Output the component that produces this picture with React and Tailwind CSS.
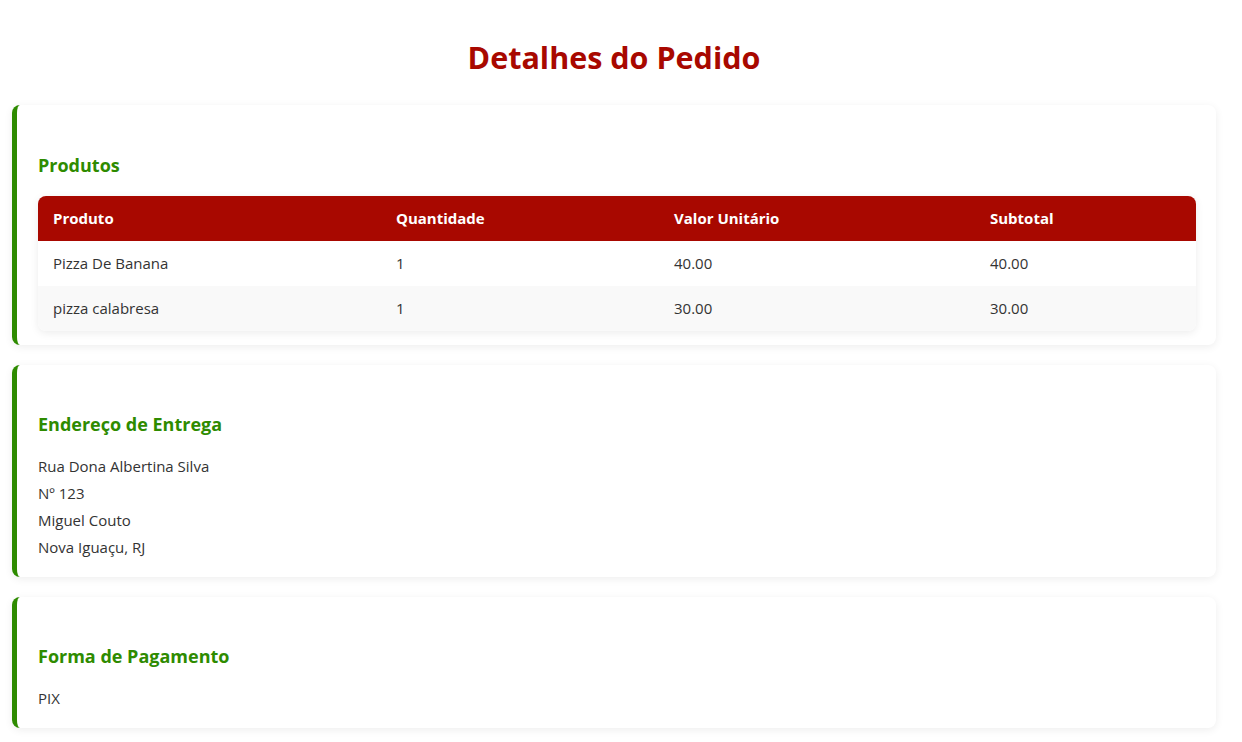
const produtos = [
  { nome: "Pizza De Banana", qtd: 1, valor: "40.00", subtotal: "40.00" },
  { nome: "pizza calabresa", qtd: 1, valor: "30.00", subtotal: "30.00" },
];

const Card = ({ title, children }) => (
  <div className="bg-white rounded-lg border-l-[5px] border-[#2e8b00] shadow-[0_2px_8px_rgba(0,0,0,0.07)] pl-[21px] pr-5 pt-[46px] pb-[16px]">
    <h2 className="text-[18px] leading-[27px] font-bold text-[#2e8b00] mb-[15px]">{title}</h2>
    {children}
  </div>
);

export default function App() {
  return (
    <div className="min-h-screen bg-white text-[#333] font-['Segoe_UI','Open_Sans',sans-serif] px-3 pb-3" style={{ width: 1228 }}>
      <h1 className="text-[30.5px] leading-[40px] font-bold text-[#a80800] text-center pt-[37px] pb-[28px]">
        Detalhes do Pedido
      </h1>

      <div className="flex flex-col gap-5">
        <div className="bg-white rounded-lg border-l-[5px] border-[#2e8b00] shadow-[0_2px_8px_rgba(0,0,0,0.07)] pl-[21px] pr-5 pt-[47px] pb-[14px]">
          <h2 className="text-[18px] leading-[27px] font-bold text-[#2e8b00] mb-[17px]">Produtos</h2>
          <div className="rounded-lg overflow-hidden shadow-[0_2px_8px_rgba(0,0,0,0.08)]">
            <table className="w-full text-[15px] border-collapse">
              <thead>
                <tr className="bg-[#a80800] text-white h-[45px]">
                  <th className="text-left font-bold px-[15px] w-[343px]">Produto</th>
                  <th className="text-left font-bold px-[15px] w-[278px]">Quantidade</th>
                  <th className="text-left font-bold px-[15px] w-[316px]">Valor Unitário</th>
                  <th className="text-left font-bold px-[15px]">Subtotal</th>
                </tr>
              </thead>
              <tbody>
                {produtos.map((p, i) => (
                  <tr key={p.nome} className={`h-[45px] ${i % 2 === 1 ? "bg-[#f9f9f9]" : "bg-white"}`}>
                    <td className="px-[15px]">{p.nome}</td>
                    <td className="px-[15px]">{p.qtd}</td>
                    <td className="px-[15px]">{p.valor}</td>
                    <td className="px-[15px]">{p.subtotal}</td>
                  </tr>
                ))}
              </tbody>
            </table>
          </div>
        </div>

        <Card title="Endereço de Entrega">
          <div className="text-[15px] leading-[27px]">
            <p>Rua Dona Albertina Silva</p>
            <p>Nº 123</p>
            <p>Miguel Couto</p>
            <p>Nova Iguaçu, RJ</p>
          </div>
        </Card>

        <Card title="Forma de Pagamento">
          <p className="text-[15px] leading-[27px]">PIX</p>
        </Card>
      </div>
    </div>
  );
}
